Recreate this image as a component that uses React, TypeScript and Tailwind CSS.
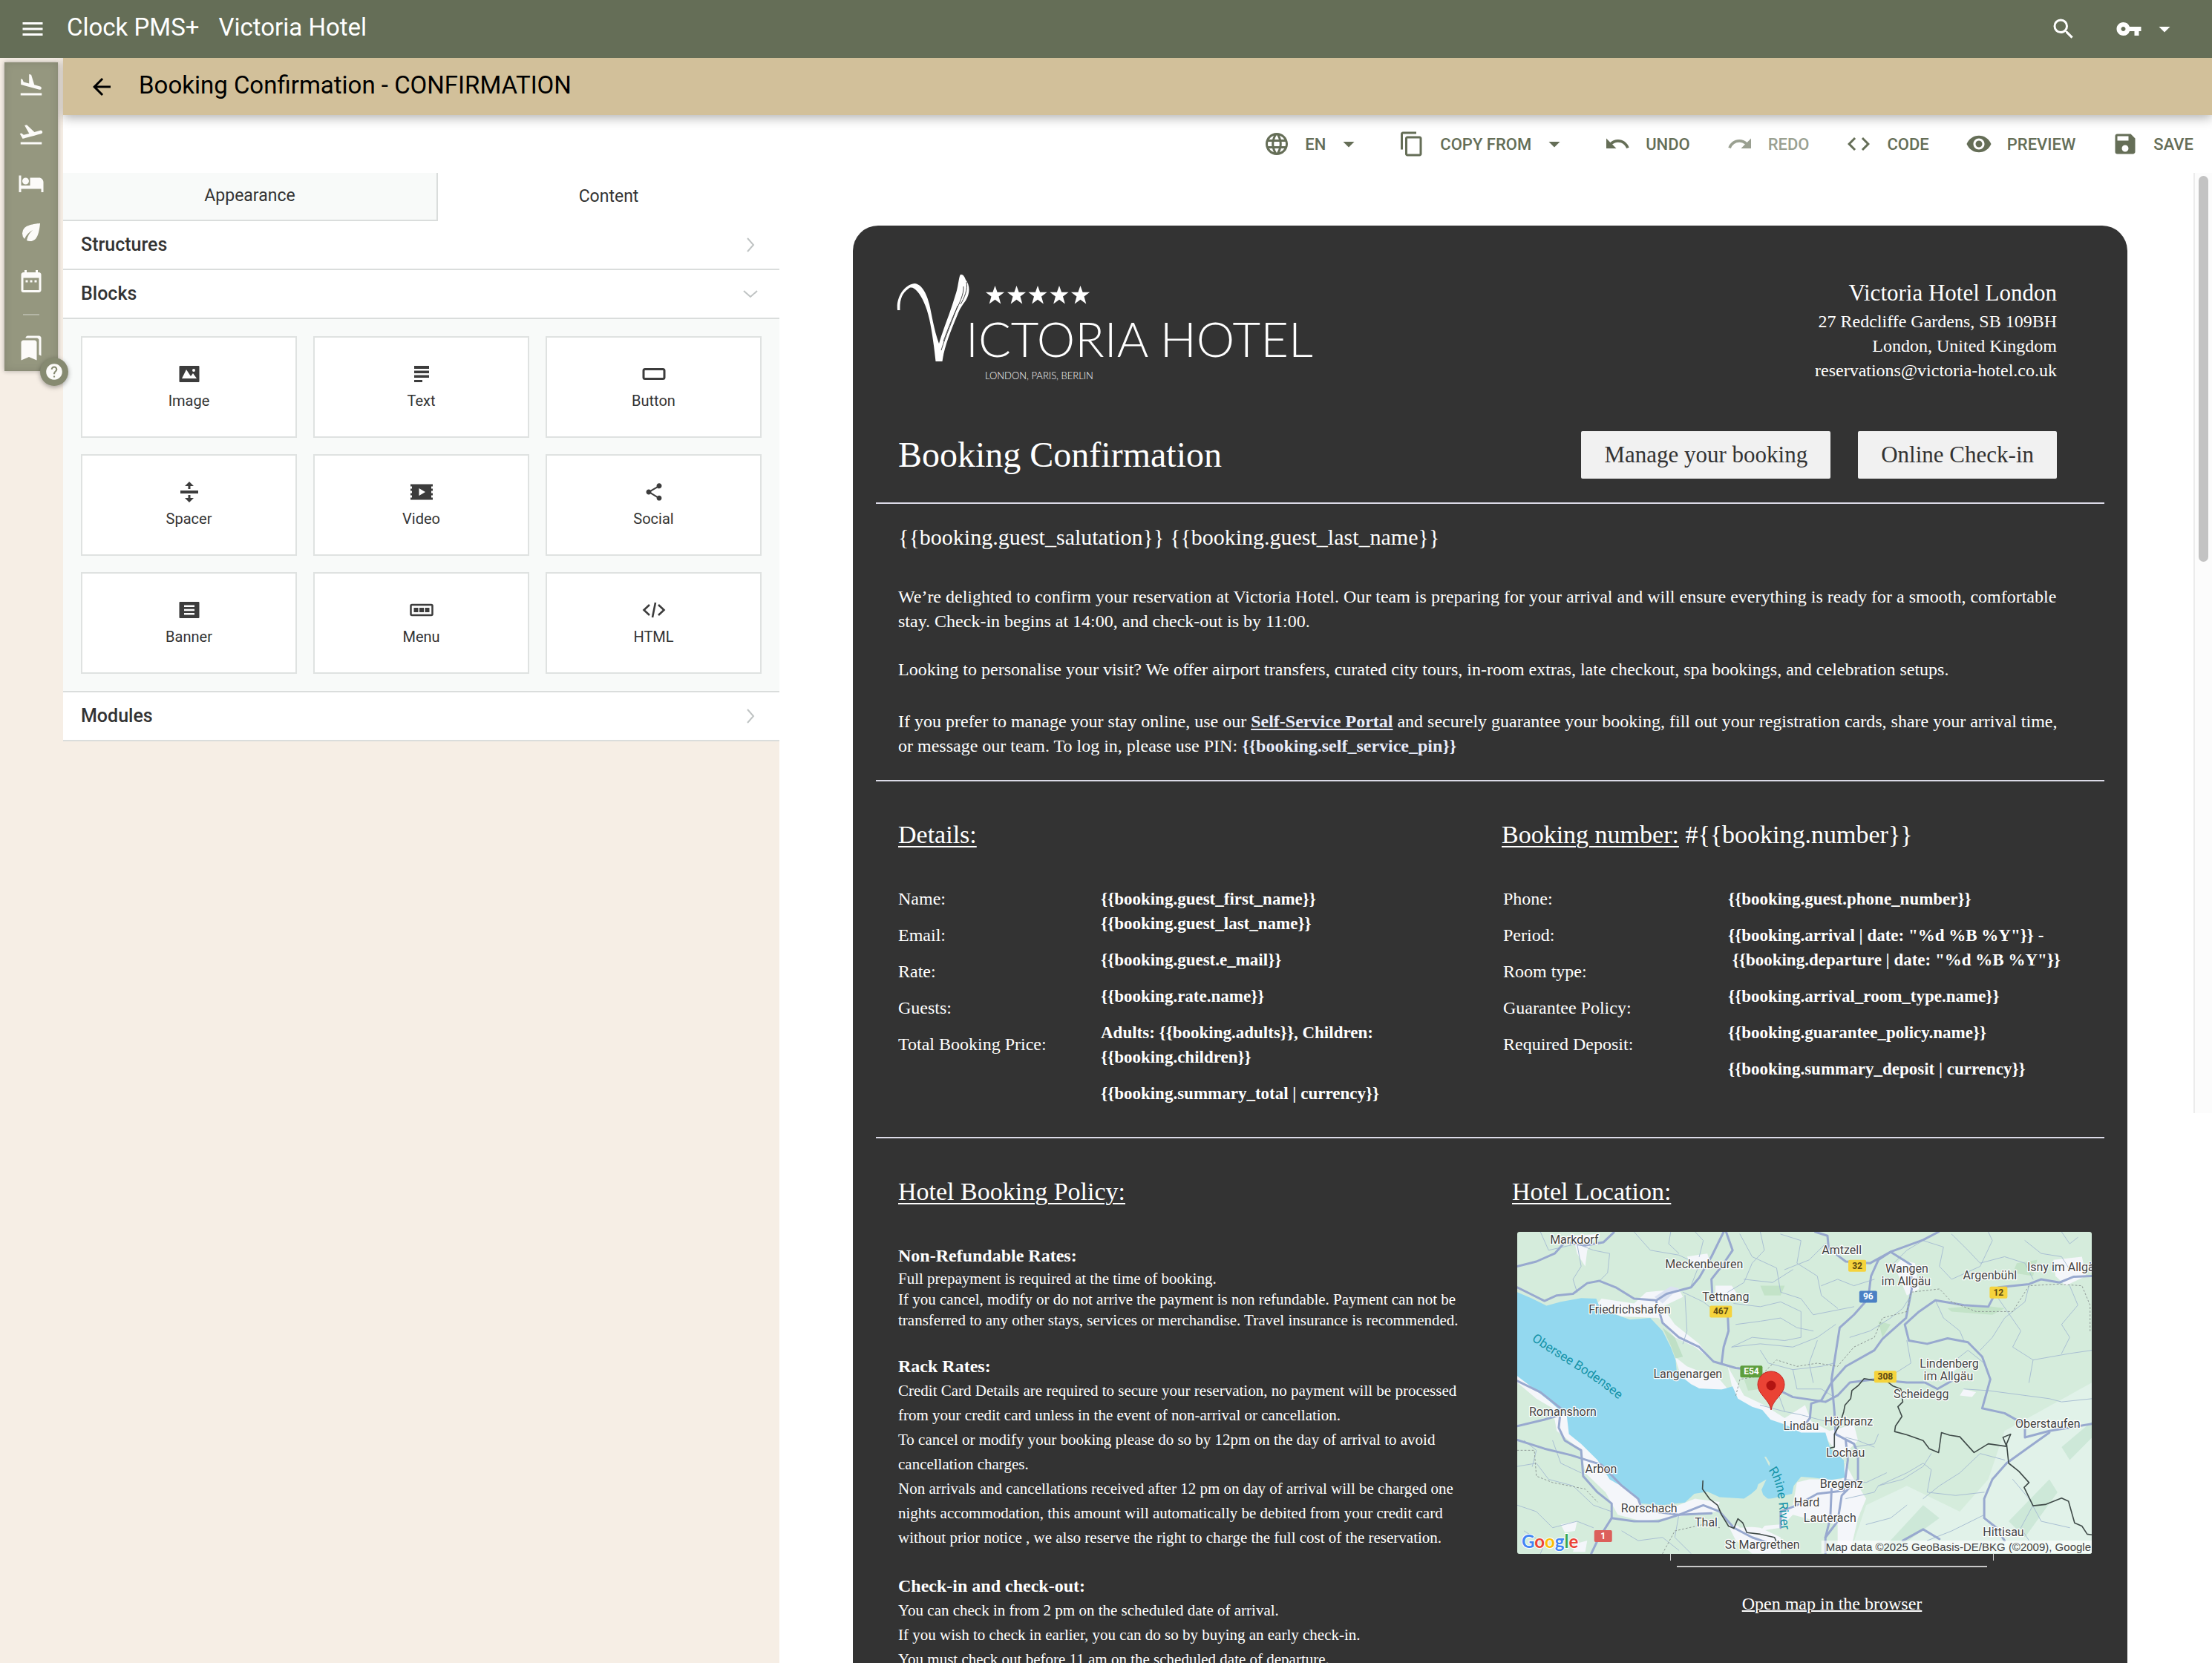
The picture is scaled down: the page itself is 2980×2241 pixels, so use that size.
import type { ComponentType, ReactNode } from "react";
import {
  MdArrowBack,
  MdArrowDropDown,
  MdBookmarks,
  MdCode,
  MdContentCopy,
  MdDateRange,
  MdEco,
  MdFlightLand,
  MdFlightTakeoff,
  MdHelp,
  MdLanguage,
  MdLocalHotel,
  MdMenu,
  MdRedo,
  MdSave,
  MdSearch,
  MdShare,
  MdUndo,
  MdVisibility,
  MdVpnKey,
} from "react-icons/md";

type Icon = ComponentType<{ className?: string }>;

/* ---------- application chrome ---------- */

function TopBar() {
  return (
    <header className="relative z-20 flex h-[78px] shrink-0 items-center bg-[#656e57] pr-[46px] pl-[26px] text-[33px] text-white">
      <button aria-label="Main menu">
        <MdMenu className="size-9" />
      </button>
      <span className="ml-7 pb-1">Clock PMS+</span>
      <span className="ml-[26px] pb-1">Victoria Hotel</span>
      <div className="ml-auto flex items-center">
        <button aria-label="Search">
          <MdSearch className="size-9" />
        </button>
        <button aria-label="Access" className="ml-[52px] flex items-center gap-3">
          <MdVpnKey className="size-9" />
          <MdArrowDropDown className="size-9" />
        </button>
      </div>
    </header>
  );
}

const railItems: { label: string; icon: Icon }[] = [
  { label: "Arrivals", icon: MdFlightLand },
  { label: "Departures", icon: MdFlightTakeoff },
  { label: "In house", icon: MdLocalHotel },
  { label: "Housekeeping", icon: MdEco },
  { label: "Calendar", icon: MdDateRange },
];

function Rail() {
  return (
    <nav className="w-[85px] shrink-0 pt-[6px] pl-[6px]">
      <div className="relative z-10 flex w-[72px] flex-col items-center bg-[#95977f] pt-[13px] pb-[13px] text-[#fcfbf9] shadow-[0_0_6px_rgba(0,0,0,0.3),inset_0_0_12px_rgba(0,0,0,0.12)]">
        <div className="flex flex-col gap-[30px]">
          {railItems.map(({ label, icon: I }) => (
            <button key={label} aria-label={label}>
              <I className="size-9" />
            </button>
          ))}
        </div>
        <div className="mt-[26px] h-[2px] w-[22px] bg-[#b4b6a6]" />
        <button aria-label="Bookmarks" className="mt-[26px]">
          <MdBookmarks className="size-9" />
        </button>
        <button
          aria-label="Help"
          className="absolute -right-[14px] -bottom-[20px] flex size-[38px] items-center justify-center rounded-full bg-[#868a71] shadow-[0_2px_6px_rgba(0,0,0,0.35)]"
        >
          <MdHelp className="size-[26px]" />
        </button>
      </div>
    </nav>
  );
}

function Tool({ icon: I, label, menu, disabled }: { icon: Icon; label: string; menu?: boolean; disabled?: boolean }) {
  return (
    <button disabled={disabled} className="flex items-center font-medium disabled:opacity-65">
      <I className="size-9" />
      <span className="ml-5">{label}</span>
      {menu && <MdArrowDropDown className="ml-[13px] size-9" />}
    </button>
  );
}

function Toolbar() {
  return (
    <div className="flex h-[78px] shrink-0 items-center justify-end gap-[49px] bg-white pr-[25px] text-[22px] text-[#656e57]">
      <Tool icon={MdLanguage} label="EN" menu />
      <Tool icon={MdContentCopy} label="COPY FROM" menu />
      <Tool icon={MdUndo} label="UNDO" />
      <Tool icon={MdRedo} label="REDO" disabled />
      <Tool icon={MdCode} label="CODE" />
      <Tool icon={MdVisibility} label="PREVIEW" />
      <Tool icon={MdSave} label="SAVE" />
    </div>
  );
}

/* ---------- block palette ---------- */

function Glyph({ children }: { children: ReactNode }) {
  return (
    <svg viewBox="0 0 32 28" className="h-7 w-8" fill="#3c3c3c" aria-hidden="true">
      {children}
    </svg>
  );
}

const blocks: { label: string; glyph: ReactNode }[] = [
  {
    label: "Image",
    glyph: (
      <Glyph>
        <path fillRule="evenodd" d="M3.500 3h25q1 0 1 1v20q0 1-1 1h-25q-1 0-1-1v-20q0-1 1-1zM6 20h20l-5-7-3 4-6-9zM20 9a2 2 0 1 0 4 0a2 2 0 1 0-4 0z" />
      </Glyph>
    ),
  },
  {
    label: "Text",
    glyph: (
      <Glyph>
        <path d="M6 3h20v4H6zM6 9.500h20v3.500H6zM6 15.500h20v3.500H6zM6 22h11v3H6z" />
      </Glyph>
    ),
  },
  {
    label: "Button",
    glyph: (
      <Glyph>
        <rect x="2" y="7.500" width="28" height="13" rx="2" fill="none" stroke="#3c3c3c" strokeWidth="3" />
      </Glyph>
    ),
  },
  {
    label: "Spacer",
    glyph: (
      <Glyph>
        <path d="M4 12h24v4H4zM16 0l6 6h-4.500v4h-3V6H10zM16 28l6-6h-4.500v-4h-3v4H10z" />
      </Glyph>
    ),
  },
  {
    label: "Video",
    glyph: (
      <Glyph>
        <path
          fillRule="evenodd"
          d="M1 3.500h30v3h-2v3h2v3h-2v3h2v3h-2v3h2v3H1v-3h2v-3H1v-3h2v-3H1v-3h2v-3H1zM12.500 9v10l8.500-5z"
        />
      </Glyph>
    ),
  },
  { label: "Social", glyph: <MdShare className="h-7 w-8 text-[#3c3c3c]" /> },
  {
    label: "Banner",
    glyph: (
      <Glyph>
        <path
          fillRule="evenodd"
          d="M3.500 3h25q1 0 1 1v20q0 1-1 1h-25q-1 0-1-1V4q0-1 1-1zM9 7.500v2.500h14V7.500zM9 12.700v2.600h14v-2.600zM9 18v2.500h14V18z"
        />
      </Glyph>
    ),
  },
  {
    label: "Menu",
    glyph: (
      <Glyph>
        <rect x="1.500" y="7" width="29" height="14" rx="1.500" fill="none" stroke="#3c3c3c" strokeWidth="2.500" />
        <path d="M5.500 11h6v6h-6zM13 11h6v6h-6zM20.500 11h6v6h-6z" />
      </Glyph>
    ),
  },
  {
    label: "HTML",
    glyph: (
      <Glyph>
        <path d="M10 7l-7.500 7 7.500 7M22 7l7.500 7-7.500 7M18 4l-4 20" fill="none" stroke="#3c3c3c" strokeWidth="2.600" />
      </Glyph>
    ),
  },
];

function Chevron({ open }: { open?: boolean }) {
  return (
    <svg viewBox="0 0 20 20" className="size-5" fill="none" stroke="#bfc3c3" strokeWidth="2" aria-hidden="true">
      <path d={open ? "M1 6l9 8 9-8" : "M6 1l8 9-8 9"} />
    </svg>
  );
}

function SectionRow({ title, open }: { title: string; open?: boolean }) {
  return (
    <button
      aria-expanded={!!open}
      className="flex h-[66px] w-full items-center justify-between border-b-2 border-[#dadddc] bg-white pr-[29px] pl-6 text-[25px] font-medium text-[#333]"
    >
      {title}
      <Chevron open={open} />
    </button>
  );
}

function Palette() {
  return (
    <aside className="w-1/3 shrink-0">
      <div role="tablist" className="flex h-[65px] bg-white text-[23px] text-[#333]">
        <button role="tab" aria-selected="false" className="w-[505px] border-r-2 border-b-2 border-[#dadddc] bg-[#f8faf9]">
          Appearance
        </button>
        <button role="tab" aria-selected="true" className="flex-1">
          Content
        </button>
      </div>
      <SectionRow title="Structures" />
      <SectionRow title="Blocks" open />
      <div className="grid grid-cols-3 gap-[22px] border-b-2 border-[#dadddc] bg-[#f8faf9] px-6 py-[23px]">
        {blocks.map(({ label, glyph }) => (
          <button
            key={label}
            className="flex h-[137px] flex-col items-center justify-center gap-2 border-2 border-[#dfe2e1] bg-white text-[20px] leading-7 text-[#333]"
          >
            {glyph}
            {label}
          </button>
        ))}
      </div>
      <SectionRow title="Modules" />
    </aside>
  );
}

/* ---------- e-mail preview ---------- */

function Logo() {
  const star = "M0-13L3.100-4.200H12.600L5 1.600 7.800 11.500 0 5.800-7.800 11.500-5 1.600-12.600-4.200H-3.100Z";
  return (
    <svg viewBox="10 8 570 148" className="h-[148px] w-[570px] overflow-visible" fill="#fff" role="img" aria-label="Victoria Hotel, London, Paris, Berlin">
      <path d="M9 58C7 42 17 24 32 22C43 23 49 38 52 50C55 62 58 84 65 103C70 85 80 62 87 38C91 27 91 17 93.500 10.500C97 9 99 12 101 17C107 25 107 35 101 45C96 52 93 56 90 64C80 88 72 108 69.500 127H60.500C59 112 56 88 52 70C48 52 42 40 36 33C32 28 27 26 24 29C15 35 12 44 12.500 58Z" />
      <path d="M102 20C104 30 99 42 94 50M98 26C99 36 92 50 86 62C80 76 76 86 71 100M90 52C84 70 74 92 68 112" fill="none" stroke="#333" strokeWidth="0.900" />
      {[140.5, 169.5, 198, 227, 255.5].map((x) => (
        <path key={x} d={star} transform={`translate(${x} 38)`} />
      ))}
      <text x="101" y="121" fontFamily="Lato" fontWeight="300" fontSize="65">
        ICTORIA HOTEL
      </text>
      <text x="127" y="151" fontFamily="Lato" fontWeight="300" fontSize="13">
        LONDON, PARIS, BERLIN
      </text>
    </svg>
  );
}

function Rule() {
  return <hr className="-mx-[30px] border-t-2 border-[#dcdbe8]" />;
}

function Lines({ items }: { items: ReactNode[] }) {
  return (
    <div className="flex flex-col gap-4">
      {items.map((item, i) => (
        <p key={i}>{item}</p>
      ))}
    </div>
  );
}

function Heading({ children }: { children: ReactNode }) {
  return <h2 className="text-[34px] leading-[44px] underline decoration-2 underline-offset-4">{children}</h2>;
}

/* Map artwork uses its own drawing grid; labels are converted to pixels. */
const mx = (x: number) => (x - 43) / 1.823;
const my = (y: number) => (y - 233) / 2.3;

const places: [string, number, number][] = [
  ["Markdorf", 183, 270],
  ["Meckenbeuren", 502, 345],
  ["Amtzell", 840, 303],
  ["Wangen", 1000, 360],
  ["im Allgäu", 998, 399],
  ["Argenbühl", 1204, 381],
  ["Isny im Allgäu", 1386, 356],
  ["Tettnang", 555, 448],
  ["Friedrichshafen", 319, 486],
  ["Langenargen", 462, 686],
  ["Lindenberg", 1104, 654],
  ["im Allgäu", 1102, 693],
  ["Scheidegg", 1035, 748],
  ["Romanshorn", 155, 804],
  ["Lindau", 740, 847],
  ["Hörbranz", 857, 834],
  ["Oberstaufen", 1346, 840],
  ["Lochau", 849, 930],
  ["Arbon", 249, 981],
  ["Bregenz", 839, 1027],
  ["Hard", 754, 1084],
  ["Rorschach", 367, 1103],
  ["Lauterach", 811, 1132],
  ["Thal", 507, 1145],
  ["Hittisau", 1237, 1177],
  ["St Margrethen", 645, 1216],
];

const shields: [string, number, number, string, string][] = [
  ["32", 878, 338, "#f5d33c", "#5b4a12"],
  ["12", 1225, 421, "#f5d33c", "#5b4a12"],
  ["467", 543, 480, "#f5d33c", "#5b4a12"],
  ["308", 947, 682, "#f5d33c", "#5b4a12"],
  ["96", 905, 434, "#4a80c4", "#fff"],
  ["E54", 618, 666, "#5e9e3e", "#fff"],
  ["1", 254, 1176, "#dc5f5b", "#fff"],
];

const majorRoads = [
  "M43 405L75 425L110 447L140 430L180 425L215 392L245 385L285 405L330 440L385 445L410 425L470 405L490 375L520 310L550 233",
  "M556 233L572 290L545 340L520 380L522 425",
  "M43 340L90 325L135 300L160 265L210 275L255 265L280 235",
  "M385 450L400 515L440 560L490 590L525 635L580 655L620 660L680 720L720 745L800 760L830 740L860 700L920 690L1000 700L1045 700L1075 720L1110 695",
  "M560 490L562 540L550 590L545 640",
  "M1078 233L1040 258L960 295L930 320L912 370L905 440L870 490L835 530L825 610L815 690L822 790L825 860L870 890L880 920L880 1000L840 1050L830 1130L800 1180L800 1230",
  "M775 233L805 245L808 285L850 325L910 330L960 295L1010 335L1012 410L998 500L940 565L920 600L850 650L815 700L790 755L765 765L762 810L740 845",
  "M1455 370L1410 372L1375 390L1330 380L1300 395L1225 405L1200 465L1140 460L1070 445L1030 480L995 520L1005 570L1050 580L1100 563L1150 575L1185 620L1205 690L1185 780L1240 795L1290 830L1290 870L1350 850L1455 828",
  "M1350 855L1300 900L1245 950L1210 1000L1190 1060L1190 1120L1220 1150L1240 1190",
  "M43 695L100 730L150 780L145 840L160 880L200 910L205 990L240 1040L275 1075L275 1120L240 1190L225 1230",
  "M43 878L110 905L175 925L250 955L300 1020L340 1060L350 1095L440 1110L500 1080L540 1100L575 1150L620 1180L690 1210",
  "M275 1120L330 1130L390 1130L440 1110L520 1105",
  "M43 835L110 815L150 800",
  "M690 1150L690 1100L730 1080L780 1045L845 1035L855 940L850 880",
  "M815 1030L812 1120L800 1180M990 1190L1040 1155L1080 1185",
];

const minorRoads = [
  "M100 233L120 290L190 270L230 290L270 300L265 360L245 385",
  "M190 270L200 340L180 380L190 420",
  "M330 233L370 290L440 305L490 335L470 400",
  "M420 233L415 270L440 300M480 233L500 260L490 310",
  "M590 240L620 310L680 345L690 420L740 440L770 490L870 465",
  "M640 233L650 290L620 330L600 390L560 420",
  "M690 240L740 260L730 330L780 370L790 430L830 470",
  "M575 455L640 465L690 450L740 480L740 560L700 570L620 560L570 590",
  "M450 420L500 450L530 480M455 430L460 540L450 580",
  "M700 350L760 320L800 270M600 380L670 390L720 350",
  "M570 590L640 580L720 590L780 560L825 520",
  "M580 520L640 510L690 500L730 530L770 540",
  "M640 600L660 640L720 660L790 650L820 640",
  "M720 660L730 720L790 720L815 740M780 570L760 640L770 700",
  "M860 560L910 540L960 500L990 470L1010 430",
  "M920 380L870 400L830 380L790 400",
  "M960 340L1000 290L1040 260L1090 280L1080 340L1110 380L1180 340L1210 260L1200 233",
  "M1110 240L1150 290L1180 330L1240 310L1290 330L1310 380",
  "M1380 233L1400 270L1420 250M1290 260L1330 300L1380 310L1400 350",
  "M1300 400L1290 450L1240 500L1210 560L1180 600",
  "M1070 445L1090 500L1130 540L1140 570M1225 440L1280 540L1260 590L1310 630L1300 700",
  "M1455 600L1400 610L1310 630M1400 400L1420 460L1380 520L1400 560L1380 610",
  "M1140 720L1200 725L1290 740L1350 750L1380 760L1455 750",
  "M1000 570L1010 640L960 680M1110 640L1150 600L1190 640",
  "M920 900L880 880L850 870M930 1020L1000 980L1040 950L1060 970L1050 1040L1120 1050L1190 1040",
  "M850 1060L920 1040L930 1020L990 1000L1040 960L1060 920",
  "M1240 940L1180 920L1130 980L1080 1020L1040 1060",
  "M1000 1080L960 1120L900 1140M1050 1190L1110 1160L1190 1110",
  "M43 960L90 950L120 1000L180 1020L230 1080L275 1100",
  "M43 1080L90 1100L130 1150L190 1130L230 1150M60 1160L110 1200L100 1230",
  "M130 880L150 950L200 980M60 880L90 910L80 960",
  "M300 1160L340 1190L400 1180L440 1220M440 1110L430 1180L470 1230",
  "M850 1000L900 1010L950 980M870 900L920 890L930 860",
  "M1260 1000L1300 1060L1330 1130L1400 1150M1310 1080L1280 1150L1300 1190",
  "M640 770L700 790L740 800L800 820M680 720L700 790",
];

const townAreas = [
  "M360 420L440 410L450 435L400 465L430 520L490 580L520 630L480 590L430 560L390 500L300 495L270 480L240 455L250 440L330 455Z",
  "M180 245L240 240L215 290L210 340L190 300Z",
  "M460 310L510 300L520 340L480 350Z",
  "M530 400L570 400L590 440L530 450Z",
  "M43 660L100 720L135 750L165 780L180 850L220 900L260 960L330 1030L350 1080L420 1090L480 1060L540 1070L535 1100L470 1110L350 1130L290 1110L260 1040L210 980L200 910L140 850L130 780L90 750L43 700Z",
  "M560 650L600 740L650 770L700 810L750 770L765 820L810 850L870 830L880 880L840 930L870 1000L900 1060L880 1120L860 1230L830 1230L830 1140L780 1130L720 1110L690 1150L640 1160L680 1100L720 1080L730 1010L760 1000L840 1000L850 950L800 870L720 865L680 830L620 790L580 770Z",
  "M430 620L460 650L540 690L560 720L500 725L450 700Z",
  "M985 320L1020 330L1030 410L1000 430L970 340Z",
  "M1360 320L1430 310L1440 370L1390 400L1365 370Z",
  "M1140 720L1170 730L1160 745L1130 740ZM1080 630L1130 650L1110 670ZM560 1140L640 1150L690 1180L690 1230L620 1230L580 1190Z",
  "M150 1140L190 1130L185 1160L160 1165ZM185 1200L215 1190L210 1225L180 1225Z",
];

function LocationMap() {
  return (
    <svg viewBox="0 0 774 434" className="h-[434px] w-[774px] rounded-[3px]" role="img" aria-label="Map of the hotel surroundings">
      <rect width="774" height="434" fill="#d5ecdc" />
      <g transform="scale(0.5485 0.4348) translate(-43 -233)" fill="none" strokeLinejoin="round" strokeLinecap="round">
        <path
          d="M1240 850L1455 700V1230H860L900 1080L1000 1020L1130 1100L1200 1000Z"
          fill="#e1f2e9"
        />
        <path
          d="M930 1230L1040 1080L1080 1120L960 1230ZM1250 1130L1350 1000L1370 1040L1290 1180ZM1380 900L1455 820V870L1400 940Z"
          fill="#cde8d8"
        />
        <path
          d="M1100 470L1180 460L1240 470L1210 490L1110 480ZM1270 330L1320 320L1310 370L1260 360ZM640 400L700 400L690 430L650 430ZM930 510L960 520L940 560ZM600 690L640 680L640 720L610 725Z"
          fill="#c3e3c8"
        />
        {townAreas.map((d) => (
          <path key={d} d={d} fill="#f4f6fa" />
        ))}
        <path
          d="M43 420L80 440L115 462L150 450L200 438L237 440L245 465L290 492L320 505L370 500L400 540L420 590L432 630L435 670L470 705L490 718L545 722L572 712L585 750L620 775L645 785L665 815L700 830L740 855L800 855L812 905L845 940L848 995L815 1002L770 995L740 992L722 1020L718 1045L700 1050L660 1062L640 1040L655 1000L635 1015L630 1035L600 1060L540 1055L510 1038L478 1045L455 1072L400 1080L345 1075L325 1040L270 1000L240 940L200 890L170 860L165 805L120 755L90 725L43 680Z"
          fill="#93d8ef"
        />
        <path d="M540 1060L600 1065L640 1020L650 1060L700 1060L690 1140L590 1150L560 1110Z" fill="#d5ecdc" />
        <path d="M650 930L662 960L664 950L654 930Z" fill="#d5ecdc" />
        <path d="M400 530L430 560L450 620L432 625L420 585Z" fill="#bfe0c6" />
        <path d="M380 435L420 402L440 408L400 455Z" fill="#dbe2f1" />
        {minorRoads.map((d) => (
          <path key={d} d={d} stroke="#a9bfd3" strokeWidth="1" vectorEffect="non-scaling-stroke" />
        ))}
        {majorRoads.map((d) => (
          <path key={d} d={d} stroke="#98a9cf" strokeWidth="3" vectorEffect="non-scaling-stroke" />
        ))}
        <path
          d="M580 740L590 690L640 680L680 630L730 650L780 640L830 650L870 590L920 560L940 500L1000 480L1010 420L1080 410L1110 450L1170 480L1260 480L1300 400L1370 395L1430 400L1450 460L1450 540M43 910L85 910L90 990L130 1010L210 1030L240 1070M400 1230L430 1160L500 1140L540 1150"
          stroke="#8f9a97"
          strokeWidth="1"
          strokeDasharray="2 3"
          vectorEffect="non-scaling-stroke"
        />
        <path
          d="M499 1005L498 1030L515 1060L535 1080L545 1110L562 1145L575 1152L585 1122L597 1135L607 1165L640 1170L675 1180L680 1195M812 903L822 900L822 860L835 830L845 790L848 770L862 750L865 725L880 710L895 688L915 692L950 695L965 710L985 720L990 760L978 775L988 805L972 835L970 852L1000 862L1040 880L1055 905L1078 917L1085 855L1105 863L1130 868L1165 917L1200 890L1245 898L1236 870L1255 860L1245 890L1250 950L1275 975L1300 1010L1288 1025L1310 1082L1340 1078L1380 1058L1397 1068L1412 1135L1430 1145L1443 1170L1455 1172"
          stroke="#3f4a48"
          strokeWidth="1.600"
          vectorEffect="non-scaling-stroke"
        />
      </g>
      <rect x={mx(790)} y={my(1190)} width="366" height="17" fill="#fff" fillOpacity="0.6" />
      <g fontFamily="Roboto" fontSize="16" textAnchor="middle" fill="#444" stroke="#fff" strokeWidth="2.500" paintOrder="stroke" strokeLinejoin="round">
        {places.map(([name, x, y]) => (
          <text key={`${name}${x}`} x={mx(x)} y={my(y)}>
            {name}
          </text>
        ))}
      </g>
      <defs>
        <path id="lake-name" d="M19 146C62 176 104 196 148 236" />
        <path id="river-name" d="M338 321C356 345 350 370 359 425" />
      </defs>
      <g fontFamily="Roboto" fontSize="17" fill="#1593a8">
        <text>
          <textPath href="#lake-name">Obersee Bodensee</textPath>
        </text>
        <text>
          <textPath href="#river-name">Rhine River</textPath>
        </text>
      </g>
      <g fontFamily="Roboto" fontSize="12" fontWeight="700" textAnchor="middle">
        {shields.map(([text, x, y, bg, fg]) => (
          <g key={text}>
            <rect x={mx(x) - (text.length > 2 ? 15 : 12)} y={my(y) - 8} width={text.length > 2 ? 30 : 24} height="16" rx="2" fill={bg} />
            <text x={mx(x)} y={my(y) + 4} fill={fg}>
              {text}
            </text>
          </g>
        ))}
      </g>
      <path
        d="M342 240C340 226 324 219 324 206A18 18 0 0 1 360 206C360 219 344 226 342 240Z"
        fill="#ea4335"
        stroke="#c5221f"
        strokeWidth="1"
      />
      <circle cx="342" cy="207" r="6.500" fill="#b31412" />
      <text x="6" y="426" fontFamily="Lato" fontSize="24" fontWeight="700" stroke="#fff" strokeWidth="2" paintOrder="stroke">
        <tspan fill="#4285f4">G</tspan>
        <tspan fill="#ea4335">o</tspan>
        <tspan fill="#fbbc05">o</tspan>
        <tspan fill="#4285f4">g</tspan>
        <tspan fill="#34a853">l</tspan>
        <tspan fill="#ea4335">e</tspan>
      </text>
      <text x="773" y="430" fontFamily="Liberation Sans" fontSize="15" textAnchor="end" fill="#444">
        Map data ©2025 GeoBasis-DE/BKG (©2009), Google
      </text>
    </svg>
  );
}

function Email() {
  return (
    <article className="rounded-t-[34px] bg-[#333] px-[61px] pt-16 font-['Liberation_Serif',serif] text-[24px] leading-[33px] whitespace-nowrap text-white">
      <div className="flex justify-between">
        <Logo />
        <address className="pt-[5px] pr-[34px] text-right not-italic">
          <p className="text-[31px] leading-[44px]">Victoria Hotel London</p>
          <p>27 Redcliffe Gardens, SB 109BH</p>
          <p>London, United Kingdom</p>
          <p>reservations@victoria-hotel.co.uk</p>
        </address>
      </div>

      <div className="mt-[65px] flex items-center justify-between pr-[34px]">
        <h1 className="text-[48px] leading-[64px]">Booking Confirmation</h1>
        <div className="flex gap-[37px] text-[31px] leading-[64px] text-[#333]">
          <a href="#manage" className="rounded-[2px] bg-[#f1f1f1] px-[31px]">
            Manage your booking
          </a>
          <a href="#check-in" className="rounded-[2px] bg-[#f1f1f1] px-[31px]">
            Online Check-in
          </a>
        </div>
      </div>

      <div className="mt-8">
        <Rule />
      </div>
      <h2 className="mt-[23px] text-[30px] leading-[44px]">{"{{booking.guest_salutation}} {{booking.guest_last_name}}"}</h2>
      <p className="mt-[42px]">
        We’re delighted to confirm your reservation at Victoria Hotel. Our team is preparing for your arrival and will ensure everything is ready for a smooth, comfortable
        <br />
        stay. Check-in begins at 14:00, and check-out is by 11:00.
      </p>
      <p className="mt-8">
        Looking to personalise your visit? We offer airport transfers, curated city tours, in-room extras, late checkout, spa bookings, and celebration setups.
      </p>
      <p className="mt-[37px]">
        If you prefer to manage your stay online, use our{" "}
        <a href="#portal" className="font-bold text-[#e6ebfb] underline">
          Self-Service Portal
        </a>{" "}
        and securely guarantee your booking, fill out your registration cards, share your arrival time,
        <br />
        or message our team. To log in, please use PIN: <b className="text-[#e6ebfb]">{"{{booking.self_service_pin}}"}</b>
      </p>
      <div className="mt-[29px]">
        <Rule />
      </div>

      <div className="mt-[50px] flex">
        <section className="w-[813px] shrink-0">
          <Heading>Details:</Heading>
          <div className="mt-12 flex">
            <div className="w-[273px]">
              <Lines items={["Name:", "Email:", "Rate:", "Guests:", "Total Booking Price:"]} />
            </div>
            <div className="text-[23px] font-bold">
              <Lines
                items={[
                  <>
                    {"{{booking.guest_first_name}}"}
                    <br />
                    {"{{booking.guest_last_name}}"}
                  </>,
                  "{{booking.guest.e_mail}}",
                  "{{booking.rate.name}}",
                  <>
                    {"Adults: {{booking.adults}}, Children:"}
                    <br />
                    {"{{booking.children}}"}
                  </>,
                  "{{booking.summary_total | currency}}",
                ]}
              />
            </div>
          </div>
        </section>
        <section>
          <h2 className="text-[34px] leading-[44px]">
            <span className="underline decoration-2 underline-offset-4">Booking number:</span>
            {" #{{booking.number}}"}
          </h2>
          <div className="mt-12 flex">
            <div className="w-[305px] pl-[2px]">
              <Lines items={["Phone:", "Period:", "Room type:", "Guarantee Policy:", "Required Deposit:"]} />
            </div>
            <div className="text-[23px] font-bold">
              <Lines
                items={[
                  "{{booking.guest.phone_number}}",
                  <>
                    {'{{booking.arrival | date: "%d %B %Y"}} -'}
                    <br />
                    {'\u00a0{{booking.departure | date: "%d %B %Y"}}'}
                  </>,
                  "{{booking.arrival_room_type.name}}",
                  "{{booking.guarantee_policy.name}}",
                  "{{booking.summary_deposit | currency}}",
                ]}
              />
            </div>
          </div>
        </section>
      </div>
      <div className="mt-[42px]">
        <Rule />
      </div>

      <div className="mt-[50px] flex">
        <section className="w-[827px] shrink-0 text-[21px]">
          <Heading>Hotel Booking Policy:</Heading>
          <h3 className="mt-12 text-[24px] font-bold">Non-Refundable Rates:</h3>
          <p className="leading-7">
            Full prepayment is required at the time of booking.
            <br />
            If you cancel, modify or do not arrive the payment is non refundable. Payment can not be
            <br />
            transferred to any other stays, services or merchandise. Travel insurance is recommended.
          </p>
          <h3 className="mt-8 text-[24px] font-bold">Rack Rates:</h3>
          <p>
            Credit Card Details are required to secure your reservation, no payment will be processed
            <br />
            from your credit card unless in the event of non-arrival or cancellation.
            <br />
            To cancel or modify your booking please do so by 12pm on the day of arrival to avoid
            <br />
            cancellation charges.
            <br />
            Non arrivals and cancellations received after 12 pm on day of arrival will be charged one
            <br />
            nights accommodation, this amount will automatically be debited from your credit card
            <br />
            without prior notice , we also reserve the right to charge the full cost of the reservation.
          </p>
          <h3 className="mt-8 text-[24px] font-bold">Check-in and check-out:</h3>
          <p>
            You can check in from 2 pm on the scheduled date of arrival.
            <br />
            If you wish to check in earlier, you can do so by buying an early check-in.
            <br />
            You must check out before 11 am on the scheduled date of departure.
          </p>
        </section>
        <section>
          <Heading>Hotel Location:</Heading>
          <div className="mt-8 ml-[7px] flex flex-col items-center">
            <LocationMap />
            <div className="ml-[74px] flex flex-col items-center">
              <div className="h-[9px] w-[436px] border-x border-[#cfcfcf]" />
              <div className="mt-[7px] h-[2px] w-[418px] bg-[#c8c8c8]" />
              <a href="#map" className="mt-[33px] text-[24px] underline decoration-2">
                Open map in the browser
              </a>
            </div>
          </div>
        </section>
      </div>
    </article>
  );
}

export default function App() {
  return (
    <div className="flex h-screen flex-col overflow-hidden bg-[#f6eee5] font-[Roboto,sans-serif]">
      <TopBar />
      <div className="flex min-h-0 flex-1">
        <Rail />
        <main className="flex min-w-0 flex-1 flex-col">
          <div className="relative flex h-[77px] shrink-0 items-center bg-[#d2c09a] pl-[34px] text-[33px] text-black shadow-[0_4px_14px_rgba(0,0,0,0.3)]">
            <button aria-label="Back">
              <MdArrowBack className="size-9" />
            </button>
            <h1 className="ml-8 pb-1">Booking Confirmation - CONFIRMATION</h1>
          </div>
          <Toolbar />
          <div className="flex min-h-0 flex-1">
            <Palette />
            <div className="flex min-w-0 flex-1 bg-white">
              <div className="min-w-0 flex-1 overflow-hidden pt-[71px] pr-[89px] pl-[99px]">
                <Email />
              </div>
              <div className="h-[1267px] w-[25px] shrink-0 border-l-2 border-[#ececec] bg-[#fcfcfc] pt-1 pl-[5px]">
                <div className="h-[520px] w-[13px] rounded-full bg-[#c3c3c3]" />
              </div>
            </div>
          </div>
        </main>
      </div>
    </div>
  );
}
